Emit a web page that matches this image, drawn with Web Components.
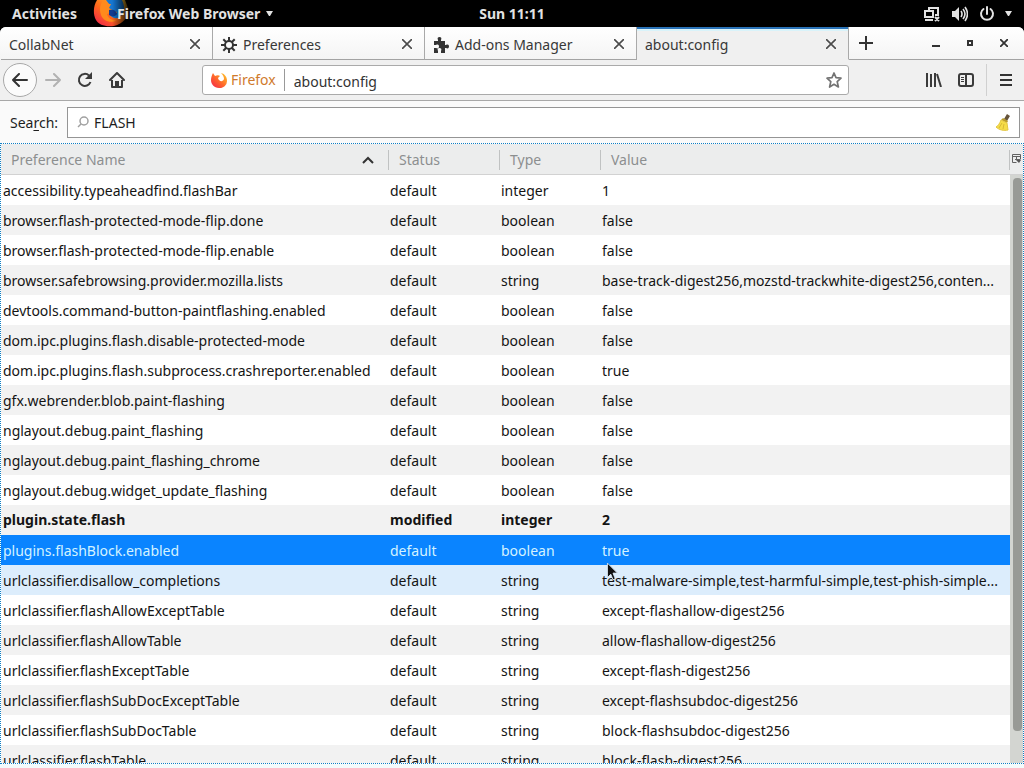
<!DOCTYPE html>
<html lang="en">
<head>
<meta charset="utf-8">
<title>about:config</title>
<style>
    html, body {
        height: 100%;
        margin: 0;
        overflow: hidden;
        background: #000;
    }
</style>
</head>
<body>
<config-desktop></config-desktop>

<script>
// Shared by every component, since page rules do not reach a shadow root.
const base = `
    * { box-sizing: border-box; }
    button, input { font: inherit; color: inherit; margin: 0; }
    button {
        display: inline-flex;
        align-items: center;
        justify-content: center;
        padding: 0;
        border: 0;
        background: none;
    }
    button:focus-visible, input:focus-visible { outline: 1px dotted #0a84ff; }
    svg { display: block; flex: none; }
`

function defineElement(name, css, html, setup) {
    const template = document.createElement('template')
    template.innerHTML = `<style>${base}${css}</style>${html}`

    customElements.define(name, class extends HTMLElement {
        constructor() {
            super()
            this.attachShadow({ mode: 'open' })
            this.shadowRoot.appendChild(template.content.cloneNode(true))
        }

        connectedCallback() {
            if (setup) setup(this, this.shadowRoot)
        }
    })
}

// GNOME top bar
defineElement('shell-bar', `
    :host {
        display: grid;
        grid-template-columns: 1fr auto 1fr;
        align-items: center;
        height: 27px;
        flex: none;
        background: #000;
        color: #e2e2e2;
        font-weight: 700;
    }
    .left { display: flex; align-items: center; height: 27px; padding-left: 12px; gap: 16px; }
    .app { position: relative; height: 27px; padding-left: 24px; gap: 6px; }
    .app .logo { position: absolute; left: 0; top: 0; }
    .app span { position: relative; }
    .right { display: flex; justify-content: flex-end; align-items: center; gap: 11px; padding-right: 12px; }
    .power { gap: 10px; }
`, `
    <div class="left">
        <button>Activities</button>
        <button class="app">
            <svg class="logo" width="38" height="27" viewBox="0 0 38 27" aria-hidden="true">
                <defs>
                    <linearGradient id="flame" x1="0" y1="1" x2="1" y2="0">
                        <stop offset="0" stop-color="#f01a55"/>
                        <stop offset=".45" stop-color="#ff6a1a"/>
                        <stop offset="1" stop-color="#ffcf28"/>
                    </linearGradient>
                    <linearGradient id="fade" x1="0" x2="1" y1="0" y2="0">
                        <stop offset=".5" stop-color="#000" stop-opacity="0"/>
                        <stop offset="1" stop-color="#000"/>
                    </linearGradient>
                </defs>
                <path fill="url(#flame)" d="M4 0C0 6 0 15 3 20c3 5 9 7 18 6 9-2 15-9 14-18l-3-8z"/>
                <path fill="#1677d2" d="M13 0h16c3 6 3 12-1 16-4 4-9 2-11-1 3 1 6 0 7-3l-5-1c-3-1-4-4-3-7z"/>
                <path fill="#ff8a1c" d="M11 0c2 3 3 4 7 4l-2 4 5 3c-3 3-5 2-7 3 1 4 5 7 10 6-6 4-14 1-16-5C6 9 7 3 11 0z"/>
                <path fill="#123b91" d="M16 10c4-1 7 0 8 4-2 3-5 3-8 1z"/>
                <path fill="url(#fade)" d="M0 0h38v27H0z"/>
            </svg>
            <span>Firefox Web Browser</span>
            <svg width="7" height="5" viewBox="0 0 7 5" aria-hidden="true"><path fill="#e2e2e2" d="M0 0h7L4 5H3z"/></svg>
        </button>
    </div>
    <button>Sun 11:11</button>
    <div class="right">
        <button aria-label="Network">
            <svg width="18" height="16" viewBox="0 0 18 16" fill="none" stroke="#e2e2e2" stroke-width="2">
                <path d="M6 4V2h9v7h-3M2 5h8v6H2zM2 14h8M12 11l4 4M16 11l-4 4"/>
            </svg>
        </button>
        <button aria-label="Volume">
            <svg width="16" height="16" viewBox="0 0 16 16">
                <path fill="#e2e2e2" d="M0 5h3l4-4v14l-4-4H0z"/>
                <path fill="none" stroke="#e2e2e2" stroke-width="1.6" d="M9 5q2 3 0 6M11 3q4 5 0 10M13 1q5 7 0 14"/>
            </svg>
        </button>
        <button class="power" aria-label="System">
            <svg width="16" height="16" viewBox="0 0 16 16" fill="none" stroke="#e2e2e2" stroke-width="2" stroke-linecap="round">
                <path d="M8 1v7M4.500 3a6 6 0 1 0 7 0"/>
            </svg>
            <svg width="7" height="5" viewBox="0 0 7 5"><path fill="#e2e2e2" d="M0 0h7L4 5H3z"/></svg>
        </button>
    </div>
`)

// One tab; icon goes in the "icon" slot, title in the default slot
defineElement('browser-tab', `
    :host {
        display: flex;
        align-items: center;
        flex: 0 1 212px;
        min-width: 0;
        padding: 2px 8px 0;
        border-right: 1px solid #a9a9a9;
        border-bottom: 1px solid #a3a3a3;
        color: #383838;
    }
    :host([selected]) {
        background: #f0f0f0;
        border-bottom-color: #f0f0f0;
        box-shadow: inset 0 2px #2a73b8, inset 0 4px #d9f3fa;
    }
    .title { flex: 1; min-width: 0; height: 28px; padding-top: 2px; justify-content: flex-start; gap: 6px; white-space: nowrap; }
    .close { width: 18px; height: 18px; }
`, `
    <button class="title"><slot name="icon"></slot><slot></slot></button>
    <button class="close" aria-label="Close tab">
        <svg width="10" height="10" viewBox="0 0 10 10" fill="none" stroke="#4b4b4b" stroke-width="1.6">
            <path d="M0 0l10 10M10 0L0 10"/>
        </svg>
    </button>
`)

defineElement('tab-strip', `
    :host {
        display: flex;
        height: 33px;
        flex: none;
        padding-left: 1px;
        background: linear-gradient(#fff, #f4f4f4);
        border-radius: 6px 6px 0 0;
        overflow: hidden;
    }
    .controls {
        display: flex;
        align-items: center;
        flex: 1;
        justify-content: flex-end;
        border-bottom: 1px solid #a3a3a3;
        padding-right: 3px;
    }
    .controls button { width: 34px; height: 32px; }
    .controls .new { margin-right: auto; }
`, `
    <slot></slot>
    <div class="controls">
        <button class="new" aria-label="New tab">
            <svg width="14" height="14" viewBox="0 0 14 14" stroke="#333" stroke-width="2"><path d="M7 0v14M0 7h14"/></svg>
        </button>
        <button aria-label="Minimize">
            <svg width="10" height="10" viewBox="0 0 10 10"><path fill="#333" d="M1 7h8v2H1z"/></svg>
        </button>
        <button aria-label="Maximize">
            <svg width="6" height="6" viewBox="0 0 6 6" fill="none" stroke="#333" stroke-width="2"><path d="M1 1h4v4H1z"/></svg>
        </button>
        <button aria-label="Close window">
            <svg width="8" height="8" viewBox="0 0 8 8" stroke="#333" stroke-width="1.8"><path d="M0 0l8 8M8 0L0 8"/></svg>
        </button>
    </div>
`)

defineElement('nav-bar', `
    :host {
        display: flex;
        align-items: center;
        height: 41px;
        flex: none;
        padding-left: 3px;
        background: #f0f0f0;
        border-bottom: 1px solid #a8a8a8;
        color: #333;
    }
    .buttons, .tools { display: flex; align-items: center; flex: none; }
    .buttons button, .tools button { width: 32px; height: 32px; }
    .buttons .back {
        width: 34px;
        height: 34px;
        border: 1px solid #a8a8a8;
        border-radius: 50%;
        background: #fbfbfb;
    }
    .url {
        display: flex;
        align-items: center;
        flex: 1;
        min-width: 0;
        height: 30px;
        margin: 0 69px;
        padding: 0 6px 0 8px;
        border: 1px solid #aaa;
        border-radius: 3px;
        background: #fff;
    }
    .identity { gap: 4px; height: 22px; padding-right: 8px; border-right: 1px solid #999; color: #cf7a2c; }
    .url input { flex: 1; min-width: 0; height: 28px; padding: 2px 9px 0; border: 0; background: none; }
    .tools .menu { width: 38px; margin-left: 4px; border-left: 1px solid #d0d0d0; }
`, `
    <div class="buttons">
        <button class="back" aria-label="Back">
            <svg width="16" height="14" viewBox="0 0 16 14" fill="none" stroke="#333" stroke-width="2" stroke-linecap="round" stroke-linejoin="round"><path d="M15 7H1M7 1L1 7l6 6"/></svg>
        </button>
        <button aria-label="Forward">
            <svg width="16" height="14" viewBox="0 0 16 14" fill="none" stroke="#b2b2b2" stroke-width="2" stroke-linecap="round" stroke-linejoin="round"><path d="M1 7h14M9 1l6 6-6 6"/></svg>
        </button>
        <button aria-label="Reload">
            <svg width="16" height="16" viewBox="0 0 16 16"><path fill="none" stroke="#3b3b3b" stroke-width="2" d="M12 3.500A6 6 0 1 0 13.500 10"/><path fill="#3b3b3b" d="M15 0v7H8z"/></svg>
        </button>
        <button aria-label="Home">
            <svg width="16" height="16" viewBox="0 0 16 16" fill="none" stroke="#3b3b3b" stroke-width="2" stroke-linejoin="round"><path stroke-linecap="round" d="M1 8l7-7 7 7"/><path d="M3 8v7h10V8"/><path fill="#3b3b3b" stroke="none" d="M6 9h4v6H6z"/></svg>
        </button>
    </div>
    <div class="url">
        <button class="identity">
            <svg width="16" height="16" viewBox="0 0 16 16" aria-hidden="true">
                <defs><linearGradient id="fox" x1="0" y1="1" x2="1" y2="0"><stop offset="0" stop-color="#f2204c"/><stop offset=".5" stop-color="#ff6a2a"/><stop offset="1" stop-color="#ffd02c"/></linearGradient></defs>
                <path fill="url(#fox)" d="M2 1l2 3c2-1 4-1 5 0L7 6c1 4 5 4 6 1 0-2-1-4-3-6 4 1 6 4 6 8a7 7 0 0 1-8 7c-5 0-8-4-8-8 0-3 1-5 2-7z"/>
            </svg>
            Firefox
        </button>
        <input type="text" value="about:config" aria-label="Address">
        <button aria-label="Bookmark this page">
            <svg width="16" height="16" viewBox="0 0 16 16" fill="none" stroke="#737373" stroke-width="1.700" stroke-linejoin="round"><path d="M8 1l2 4.700 5 .5-3.800 3.400L12.400 15 8 12.300 3.600 15l1.200-5.400L1 6.200l5-.5z"/></svg>
        </button>
    </div>
    <div class="tools">
        <button aria-label="Library">
            <svg width="16" height="14" viewBox="0 0 16 14" fill="none" stroke="#3b3b3b" stroke-width="2"><path d="M1 0v14M5 1v13M9 0v14M11 1l4 13"/></svg>
        </button>
        <button aria-label="Sidebars">
            <svg width="16" height="14" viewBox="0 0 16 14" fill="none" stroke="#3b3b3b" stroke-width="2"><rect x="1" y="1" width="14" height="12" rx="2"/><path d="M8 1v12"/><path stroke-width="1" d="M3 4.500h3M3 6.500h3M3 8.500h3"/></svg>
        </button>
        <button class="menu" aria-label="Menu">
            <svg width="12" height="12" viewBox="0 0 12 12" fill="#333"><path d="M0 0h12v2H0zM0 5h12v2H0zM0 10h12v2H0z"/></svg>
        </button>
    </div>
`)

defineElement('search-filter', `
    :host {
        display: flex;
        align-items: center;
        flex: none;
        gap: 9px;
        padding: 6px 4px 5px 10px;
        background: #fafafa;
        color: #1e1e1e;
    }
    .key { text-decoration: underline; text-underline-offset: 2px; }
    .box {
        display: flex;
        align-items: center;
        flex: 1;
        height: 31px;
        padding: 0 8px;
        gap: 4px;
        border: 1px solid #959595;
        background: #fff;
    }
    input { flex: 1; min-width: 0; height: 29px; padding: 0; border: 0; background: none; }
`, `
    <label for="filter">Sea<span class="key">r</span>ch:</label>
    <div class="box">
        <svg width="14" height="14" viewBox="0 0 14 14" fill="none" stroke="#a0a0a0" stroke-width="1.500" aria-hidden="true"><circle cx="8" cy="5" r="4"/><path d="M5 8l-3 3"/></svg>
        <input id="filter" type="text" value="FLASH">
        <button aria-label="Clear">
            <svg width="16" height="18" viewBox="0 0 16 18">
                <path fill="#66543b" d="M12 0l3 2-3 5-3-2z"/>
                <path fill="#b99b2c" d="M8 4l5 3-1 2-6-3z"/>
                <path fill="#f6dd48" stroke="#e3c643" d="M6 6l6 3 1 7c-4 1-9 0-12-3 2-1 4-4 5-7z"/>
                <path fill="none" stroke="#d9ba35" d="M7 9l-3 5M9 10l-1 5"/>
            </svg>
        </button>
    </div>
`)

const prefs = [
    ['accessibility.typeaheadfind.flashBar', 'default', 'integer', '1'],
    ['browser.flash-protected-mode-flip.done', 'default', 'boolean', 'false'],
    ['browser.flash-protected-mode-flip.enable', 'default', 'boolean', 'false'],
    ['browser.safebrowsing.provider.mozilla.lists', 'default', 'string', 'base-track-digest256,mozstd-trackwhite-digest256,conten...'],
    ['devtools.command-button-paintflashing.enabled', 'default', 'boolean', 'false'],
    ['dom.ipc.plugins.flash.disable-protected-mode', 'default', 'boolean', 'false'],
    ['dom.ipc.plugins.flash.subprocess.crashreporter.enabled', 'default', 'boolean', 'true'],
    ['gfx.webrender.blob.paint-flashing', 'default', 'boolean', 'false'],
    ['nglayout.debug.paint_flashing', 'default', 'boolean', 'false'],
    ['nglayout.debug.paint_flashing_chrome', 'default', 'boolean', 'false'],
    ['nglayout.debug.widget_update_flashing', 'default', 'boolean', 'false'],
    ['plugin.state.flash', 'modified', 'integer', '2'],
    ['plugins.flashBlock.enabled', 'default', 'boolean', 'true'],
    ['urlclassifier.disallow_completions', 'default', 'string', 'test-malware-simple,test-harmful-simple,test-phish-simple...'],
    ['urlclassifier.flashAllowExceptTable', 'default', 'string', 'except-flashallow-digest256'],
    ['urlclassifier.flashAllowTable', 'default', 'string', 'allow-flashallow-digest256'],
    ['urlclassifier.flashExceptTable', 'default', 'string', 'except-flash-digest256'],
    ['urlclassifier.flashSubDocExceptTable', 'default', 'string', 'except-flashsubdoc-digest256'],
    ['urlclassifier.flashSubDocTable', 'default', 'string', 'block-flashsubdoc-digest256'],
    ['urlclassifier.flashTable', 'default', 'string', 'block-flash-digest256'],
]

defineElement('pref-tree', `
    :host {
        display: flex;
        flex: 1;
        min-height: 0;
        margin-bottom: 4px;
        border: 1px dotted #0f7fc4;
        background: #fff;
        color: #141414;
    }
    .view { flex: 1; min-width: 0; overflow: hidden; }
    table { width: 100%; table-layout: fixed; border-collapse: separate; border-spacing: 0; }
    .name { width: 388px; }
    .status { width: 111px; }
    .type { width: 101px; }
    th {
        height: 31px;
        padding: 2px 0 0;
        background: #eceded;
        border-bottom: 1px solid #d2d2d2;
        color: #8c8f90;
        font-weight: 400;
    }
    th button { width: 100%; height: 20px; padding: 0 14px 0 10px; justify-content: space-between; border-right: 1px solid #c0c2c2; }
    td { height: 30px; padding: 2px 0 0 2px; overflow: hidden; white-space: nowrap; }
    td:nth-child(2), td:nth-child(3), td:nth-child(4) { padding-left: 1px; }
    tbody tr:nth-child(even) { background: #f2f2f2; }
    tbody tr.modified { font-weight: 700; }
    tbody tr.modified td { padding-top: 0; }
    tbody tr.selected { background: #0a84ff; color: #d4f3ff; }
    tbody tr.hover { background: #dcedfc; }
    .side { display: flex; flex-direction: column; width: 13px; flex: none; }
    .picker { height: 31px; background: #eceded; border-bottom: 1px solid #d2d2d2; }
    .track { flex: 1; padding: 3px 1px 32px 3px; background: #d3d5d1; }
    .thumb { height: 100%; border-radius: 4px; background: #989a96; }
`, `
    <div class="view">
        <table>
            <colgroup><col class="name"><col class="status"><col class="type"><col></colgroup>
            <thead>
                <tr>
                    <th aria-sort="ascending"><button>Preference Name
                        <svg width="12" height="8" viewBox="0 0 12 8" fill="none" stroke="#333" stroke-width="2"><path d="M1 7l5-5 5 5"/></svg>
                    </button></th>
                    <th><button>Status</button></th>
                    <th><button>Type</button></th>
                    <th><button>Value</button></th>
                </tr>
            </thead>
            <tbody></tbody>
        </table>
    </div>
    <div class="side">
        <button class="picker" aria-label="Select columns">
            <svg width="9" height="10" viewBox="0 0 9 10" fill="none" stroke="#626262"><path d="M4.500 8.500h-4v-8h8v5M0 2.500h9M4.500 2v4M3 5.500h5"/><path fill="#555" stroke="none" d="M4 6h5L7 9z"/></svg>
        </button>
        <div class="track"><div class="thumb"></div></div>
    </div>
`, (host, root) => {
    const body = root.querySelector('tbody')
    body.textContent = ''
    for (const pref of prefs) {
        const row = body.insertRow()
        if (pref[1] === 'modified') row.className = 'modified'
        if (pref[0] === host.getAttribute('selected')) row.className = 'selected'
        if (pref[0] === host.getAttribute('hovered')) row.className = 'hover'
        for (const text of pref) row.insertCell().textContent = text
    }
})

defineElement('config-desktop', `
    :host {
        display: flex;
        flex-direction: column;
        height: 100vh;
        font: 14px/20px "Noto Sans", "Open Sans", sans-serif;
    }
    .window { display: flex; flex-direction: column; flex: 1; min-height: 0; background: #f4fafb; border-radius: 6px 6px 0 0; }
    .pointer { position: absolute; left: 606px; top: 562px; }
`, `
    <shell-bar></shell-bar>
    <div class="window">
        <tab-strip>
            <browser-tab>CollabNet</browser-tab>
            <browser-tab>
                <svg slot="icon" width="16" height="16" viewBox="0 0 16 16" fill="none" stroke="#333" stroke-width="2"><circle cx="8" cy="8" r="4"/><path d="M8 0v4M8 12v4M0 8h4M12 8h4M2.300 2.300l3 3M10.700 10.700l3 3M13.700 2.300l-3 3M5.300 10.700l-3 3"/></svg>
                Preferences
            </browser-tab>
            <browser-tab>
                <svg slot="icon" width="16" height="16" viewBox="0 0 16 16" fill="#333"><path d="M1 4h4V3C4 1 5 0 6.500 0S9 1 8 3v1h4v4h1c2-1 3 0 3 1.500S15 12 13 11h-1v5H8v-2c1-2 0-3-1.500-3S4 12 5 14v2H1v-5h2c2 1 3 0 3-1.500S5 7 3 8H1z"/></svg>
                Add-ons Manager
            </browser-tab>
            <browser-tab selected>about:config</browser-tab>
        </tab-strip>
        <nav-bar></nav-bar>
        <search-filter></search-filter>
        <pref-tree selected="plugins.flashBlock.enabled" hovered="urlclassifier.disallow_completions"></pref-tree>
    </div>
    <svg class="pointer" width="14" height="20" viewBox="0 0 12 18" aria-hidden="true"><path fill="#111" stroke="#dceaf5" stroke-width=".8" d="M1 1v13l3-3 2 5 2-1-2-5h4z"/></svg>
`)
</script>
</body>
</html>
